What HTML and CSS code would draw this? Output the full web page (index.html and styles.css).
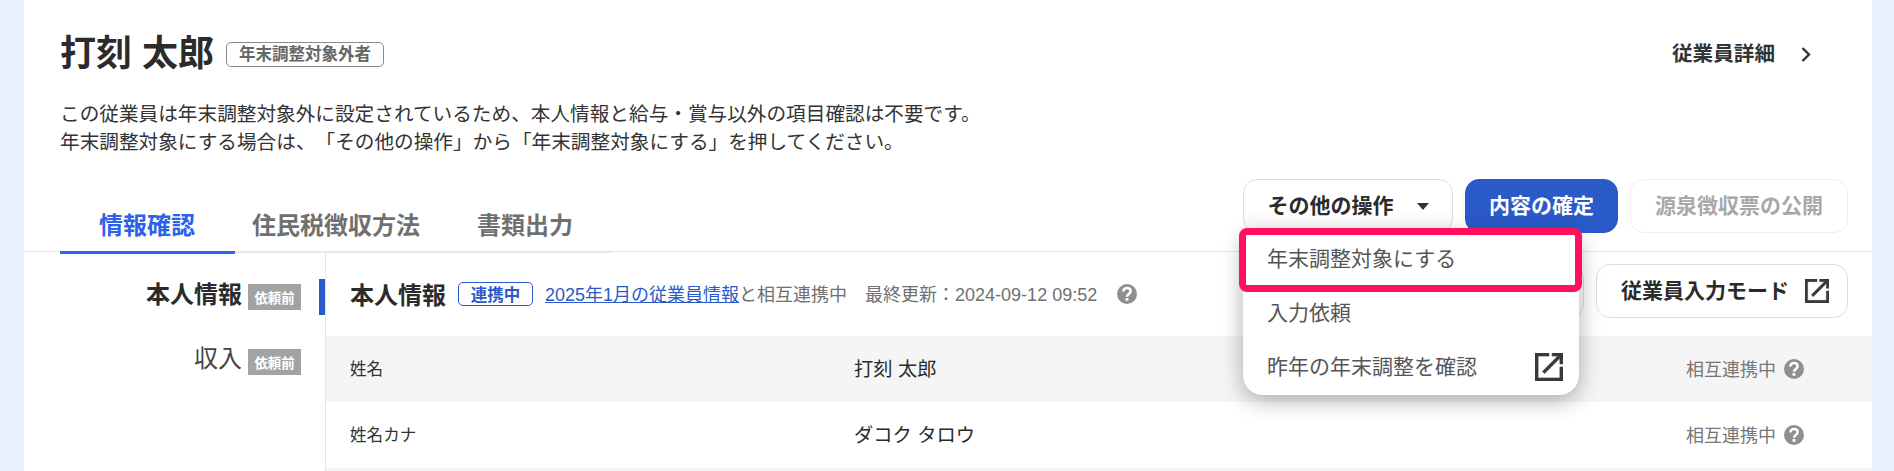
FILE: index.html
```html
<!DOCTYPE html>
<html lang="ja">
<head>
<meta charset="utf-8">
<title>打刻 太郎</title>
<link rel="stylesheet" href="styles.css">
</head>
<body>
<svg class="defs" width="0" height="0" aria-hidden="true">
  <symbol id="ext" viewBox="3 3 18 18"><path d="M19 19H5V5h7V3H3v18h18v-9h-2zM14 3v2h3.59l-9.83 9.83 1.41 1.41L19 6.41V10h2V3z"/></symbol>
  <symbol id="help" viewBox="2 2 20 20">
    <circle cx="12" cy="12" r="10" fill="#8f8f8f"/>
    <path d="M8.4 9.4c0-2.2 1.6-3.4 3.6-3.4s3.6 1.2 3.6 3.2c0 2.9-3.6 2.8-3.6 5.6" fill="none" stroke="#fff" stroke-width="2.6"/>
    <rect x="10.6" y="16" width="2.8" height="2.8" fill="#fff"/>
  </symbol>
</svg>
<main class="card">
  <header class="head">
    <div class="title">
      <h1 class="name">打刻 太郎</h1>
      <span class="tag-gray">年末調整対象外者</span>
    </div>
    <a class="detail">従業員詳細
      <svg class="chevron" viewBox="0 0 10 15"><path d="M1.5 1l6.5 6.5L1.5 14"/></svg>
    </a>
  </header>
  <div class="desc">
    <p>この従業員は年末調整対象外に設定されているため、本人情報と給与・賞与以外の項目確認は不要です。</p>
    <p>年末調整対象にする場合は、「その他の操作」から「年末調整対象にする」を押してください。</p>
  </div>
  <div class="toolbar">
    <nav class="tabs">
      <span class="tab tab-active">情報確認</span>
      <span class="tab">住民税徴収方法</span>
      <span class="tab">書類出力</span>
    </nav>
    <div class="actions">
      <div class="menu-wrap">
        <button class="btn btn-other">その他の操作<svg class="caret" viewBox="0 0 12 7"><path d="M0 0h12L6 7z"/></svg></button>
        <div class="menu">
          <div class="menu-item">年末調整対象にする</div>
          <div class="menu-item">入力依頼</div>
          <div class="menu-item menu-item-ext">昨年の年末調整を確認<svg class="icon-ext-lg"><use href="#ext"/></svg></div>
          <div class="highlight"></div>
        </div>
      </div>
      <button class="btn btn-primary">内容の確定</button>
      <button class="btn btn-disabled">源泉徴収票の公開</button>
    </div>
  </div>
  <div class="content">
    <aside class="side">
      <div class="side-item side-item-active"><span class="side-label">本人情報</span><span class="badge">依頼前</span></div>
      <div class="side-item"><span class="side-label-plain">収入</span><span class="badge">依頼前</span></div>
    </aside>
    <section class="main">
      <div class="main-head">
        <h2 class="main-title">本人情報</h2>
        <span class="tag-blue">連携中</span>
        <a class="link">2025年1月の従業員情報</a><span class="muted">と相互連携中</span>
        <span class="muted updated">最終更新：2024-09-12 09:52</span>
        <svg class="help help-head"><use href="#help"/></svg>
        <div class="main-actions">
          <div class="btn-ghost"></div>
          <button class="btn btn-mode">従業員入力モード<svg class="icon-ext"><use href="#ext"/></svg></button>
        </div>
      </div>
      <div class="row row-gray">
        <span class="row-label">姓名</span>
        <span class="row-value">打刻 太郎</span>
        <span class="row-status"><span class="status-text">相互連携中</span><svg class="help"><use href="#help"/></svg></span>
      </div>
      <div class="row">
        <span class="row-label">姓名カナ</span>
        <span class="row-value">ダコク タロウ</span>
        <span class="row-status"><span class="status-text">相互連携中</span><svg class="help"><use href="#help"/></svg></span>
      </div>
      <div class="row-end"></div>
    </section>
  </div>
</main>
</body>
</html>
```
FILE: styles.css
```css
* { box-sizing: border-box; }
html, body { margin: 0; height: 471px; overflow: hidden; }
body {
  background: #e9f1fe;
  color: #333;
  font-family: "Liberation Sans", "Noto Sans CJK JP", sans-serif;
  text-spacing-trim: space-all;
}
.defs { position: absolute; }
h1, h2, p { margin: 0; }
button { font-family: inherit; }

.card { margin: 0 22px 0 24px; height: 471px; background: #fff; }

.head {
  display: flex;
  justify-content: space-between;
  align-items: center;
  height: 76px;
  padding: 32px 61px 0 36px;
}
.title { display: flex; align-items: center; gap: 12px; }
.name { font-size: 36px; line-height: 44px; font-weight: 700; color: #2b2b2b; }
.tag-gray {
  display: flex;
  align-items: center;
  justify-content: center;
  width: 158px;
  height: 25px;
  border: 1px solid #8a8a8a;
  border-radius: 5px;
  color: #666;
  font-size: 16.5px;
  font-weight: 700;
  line-height: 1;
}
.detail { display: flex; align-items: center; gap: 26px; font-size: 20.6px; font-weight: 700; line-height: 44px; }
.chevron { width: 10px; height: 15px; fill: none; stroke: #333; stroke-width: 2.4; }

.desc { margin-top: 24px; padding-left: 36px; font-size: 19.65px; line-height: 28px; }

.toolbar {
  display: flex;
  justify-content: space-between;
  height: 73px;
  margin-top: 23px;
  padding-right: 24px;
  border-bottom: 1px solid #e5e5e5;
}
.tabs {
  display: flex;
  align-items: flex-end;
  gap: 57px;
  width: 552px;
  height: 74px;
  margin-left: 36px;
  padding: 0 0 8px 39px;
  border-bottom: 2px solid #e8e8e8;
}
.tab { position: relative; font-size: 24px; line-height: 34px; font-weight: 700; color: #707070; }
.tab-active { color: #2a62ea; }
.tab-active::after {
  content: "";
  position: absolute;
  left: -39px;
  right: -40px;
  bottom: -11px;
  height: 3px;
  background: #2a66ee;
}

.actions { display: flex; gap: 12px; height: 54px; }
.btn {
  display: flex;
  align-items: center;
  justify-content: center;
  height: 54px;
  padding: 0 0 4px;
  border: 1px solid #ddd;
  border-radius: 14px;
  background: #fff;
  color: #2b2b2b;
  font-size: 21px;
  font-weight: 700;
}
.btn-other { width: 210px; gap: 23px; background: linear-gradient(#fff 55%, #f6f6f6); }
.caret { width: 12px; height: 7px; margin-top: 4px; fill: #333; }
.btn-primary { width: 153px; background: #2a5ac8; border-color: #2a5ac8; color: #fff; }
.btn-disabled { width: 218px; border-color: #eee; color: #a8a8a8; }
.menu-wrap { position: relative; }
.menu {
  position: absolute;
  z-index: 2;
  left: 0;
  top: 53px;
  width: 336px;
  height: 163px;
  background: #fff;
  border-radius: 10px 10px 20px 20px;
  box-shadow: 0 5px 22px rgba(0, 0, 0, .32);
}
.menu-item {
  display: flex;
  align-items: center;
  justify-content: space-between;
  height: 54px;
  padding: 0 16px 4px 24px;
  color: #555;
  font-size: 21px;
}
.icon-ext-lg { width: 28px; height: 28px; margin-top: 4px; fill: #3a3a3a; stroke: #3a3a3a; stroke-width: .35; }
.highlight {
  position: absolute;
  left: -4px;
  top: -4px;
  width: 343px;
  height: 64px;
  border: 7px solid #ff0f5c;
  border-radius: 8px;
}

.content { display: flex; height: 219px; }
.side { flex: none; width: 302px; padding-top: 27px; border-right: 1px solid #e5e5e5; }
.side-item {
  position: relative;
  display: flex;
  justify-content: flex-end;
  align-items: center;
  gap: 6px;
  height: 36px;
  margin-bottom: 29px;
  padding-right: 24px;
}
.side-label { margin-bottom: 10px; font-size: 24px; font-weight: 700; color: #2b2b2b; }
.side-label-plain { margin-bottom: 12px; font-size: 24px; color: #444; }
.side-item-active::after {
  content: "";
  position: absolute;
  right: 0;
  top: 0;
  width: 6px;
  height: 36px;
  background: #2a5ac8;
}
.badge {
  display: flex;
  align-items: center;
  justify-content: center;
  width: 53px;
  height: 26px;
  background: #a3a3a3;
  color: #fff;
  font-size: 13.4px;
  font-weight: 700;
}

.main { flex: 1; min-width: 0; }
.main-head { display: flex; align-items: center; height: 84px; padding: 0 24px; }
.main-title { margin-bottom: 2px; font-size: 24px; font-weight: 700; color: #2b2b2b; }
.tag-blue {
  display: flex;
  align-items: center;
  justify-content: center;
  width: 75px;
  height: 24px;
  margin: 0 12px;
  border: 1px solid #2a5ac8;
  border-radius: 5px;
  color: #2a5ac8;
  font-size: 16.5px;
  font-weight: 700;
}
.link { margin-bottom: 2px; color: #2a5ac8; font-size: 18px; text-decoration: underline; }
.muted { margin-bottom: 2px; color: #707070; font-size: 18px; }
.updated { margin-left: 18px; }
.help { flex: none; width: 20px; height: 20px; }
.help-head { margin-left: 20px; }
.main-actions { display: flex; gap: 12px; margin: -6px 0 0 auto; }
.btn-ghost { width: 284px; height: 54px; border: 1px solid #ddd; border-radius: 14px; }
.btn-mode { width: 252px; gap: 16px; padding-left: 6px; }
.icon-ext { width: 24px; height: 24px; margin-top: 4px; fill: #3a3a3a; stroke: #3a3a3a; stroke-width: .35; }

.row { display: flex; align-items: center; height: 66px; padding: 0 68px 0 24px; font-size: 16.6px; }
.row-gray { background: #f5f5f5; }
.row-end { height: 3px; background: #f5f5f5; }
.row-label { width: 504px; padding-bottom: 2px; }
.row-value { flex: 1; padding-bottom: 3px; font-size: 19.3px; color: #2b2b2b; }
.row-status { display: flex; align-items: center; gap: 8px; color: #777; font-size: 18px; }
.status-text { margin-bottom: 2px; }
```
